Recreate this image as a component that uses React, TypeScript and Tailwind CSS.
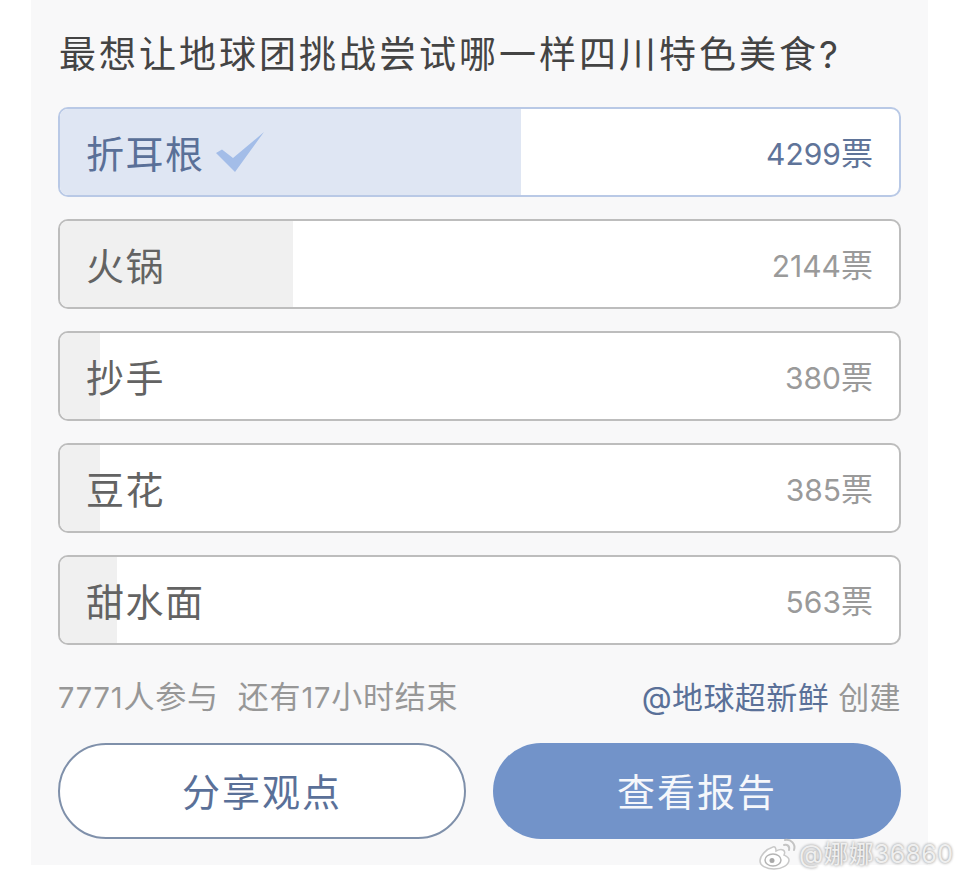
const font = "font-['Inter','Noto_Sans_CJK_SC',sans-serif]";

const options = [
  { name: '折耳根', votes: 4299, fill: 461, picked: true },
  { name: '火锅', votes: 2144, fill: 233, picked: false },
  { name: '抄手', votes: 380, fill: 40, picked: false },
  { name: '豆花', votes: 385, fill: 40, picked: false },
  { name: '甜水面', votes: 563, fill: 57, picked: false },
];

const Check = () => (
  <svg width="50" height="42" viewBox="0 0 50 42" className="ml-[10px] mt-[-4px]">
    <path d="M1 22 L7 18.5 L18 27 L49 1 L20 41 Z" fill="#a3bde8" />
  </svg>
);

const Weibo = () => (
  <svg width="38" height="32" viewBox="0 0 38 32" fill="none">
    <path d="M14 9C7 11 1 18 1 23c0 5 7 8 14 8 8 0 15-4 15-9 0-3-3-4-5-5 1-2 1-4-1-5-2-1-5 0-7 1 0-3-1-5-3-4Z" fill="#fff" stroke="#c9c9c9" strokeWidth="1.5" />
    <ellipse cx="14" cy="22" rx="8" ry="6" fill="#fff" stroke="#b5b5b5" strokeWidth="1.5" />
    <circle cx="13" cy="22.5" r="2.5" fill="#a9a9a9" />
    <path d="M25 7c3-1 6 1 5 5M26 2c6-1 11 4 9 10" stroke="#c4c4c4" strokeWidth="2" strokeLinecap="round" />
  </svg>
);

export default function App() {
  return (
    <div className={`relative w-[960px] h-[879px] bg-white overflow-hidden ${font}`}>
      <div className="ml-[31px] w-[897px] h-[865px] bg-[#f8f8f9] px-[27px] pt-[31px]">
        <h1 className="text-[37px] leading-[48px] tracking-[3px] font-normal text-[#444444] pl-[1px] whitespace-nowrap">
          最想让地球团挑战尝试哪一样四川特色美食?
        </h1>

        <div className="mt-[28px] flex flex-col gap-[22px]">
          {options.map((o) => (
            <div
              key={o.name}
              className={`relative h-[90px] w-[843px] rounded-[10px] border-2 overflow-hidden bg-white ${o.picked ? 'border-[#b9c9e6]' : 'border-[#bdbdbd]'}`}
            >
              <div
                className={`absolute left-0 top-0 bottom-0 ${o.picked ? 'bg-[#dfe6f3]' : 'bg-[#f0f0f0]'}`}
                style={{ width: o.fill }}
              />
              <div className="relative h-full flex items-center justify-between pl-[26px] pr-[26px] pt-[4px]">
                <div className="flex items-center">
                  <span className={`text-[38px] tracking-[1.5px] ${o.picked ? 'text-[#5a7098]' : 'text-[#636363]'}`}>{o.name}</span>
                  {o.picked && <Check />}
                </div>
                <span className={`text-[30px] ${o.picked ? 'text-[#5f7499]' : 'text-[#9a9a9a]'}`}>
                  {o.votes}<span className="text-[32px]">票</span>
                </span>
              </div>
            </div>
          ))}
        </div>

        <div className="mt-[30px] w-[843px] flex justify-between items-center text-[31px] leading-[44px] text-[#979797] whitespace-nowrap">
          <div className="flex gap-[19px] tracking-[0.8px]">
            <span><span className="text-[29px]">7771</span>人参与</span>
            <span>还有<span className="text-[29px]">17</span>小时结束</span>
          </div>
          <div className="tracking-[0.4px]">
            <span className="text-[#5a7098]">@地球超新鲜</span> 创建
          </div>
        </div>

        <div className="mt-[23px] w-[843px] flex justify-between">
          <button className="w-[408px] h-[96px] rounded-full border-2 border-[#7f90aa] bg-white text-[38px] tracking-[2px] text-[#5a7098] pt-[3px]">
            分享观点
          </button>
          <button className="w-[408px] h-[96px] rounded-full bg-[#7293c9] text-[38px] tracking-[2px] text-[#f5f7fb] pt-[3px]">
            查看报告
          </button>
        </div>
      </div>

      <div className="absolute left-[759px] top-[838px] flex items-center gap-[2px]">
        <Weibo />
        <span className="text-[25px] leading-[32px] tracking-[0.3px] text-[#efefef] [text-shadow:0_0_3px_#808080] whitespace-nowrap">@娜娜36860</span>
      </div>
    </div>
  );
}
